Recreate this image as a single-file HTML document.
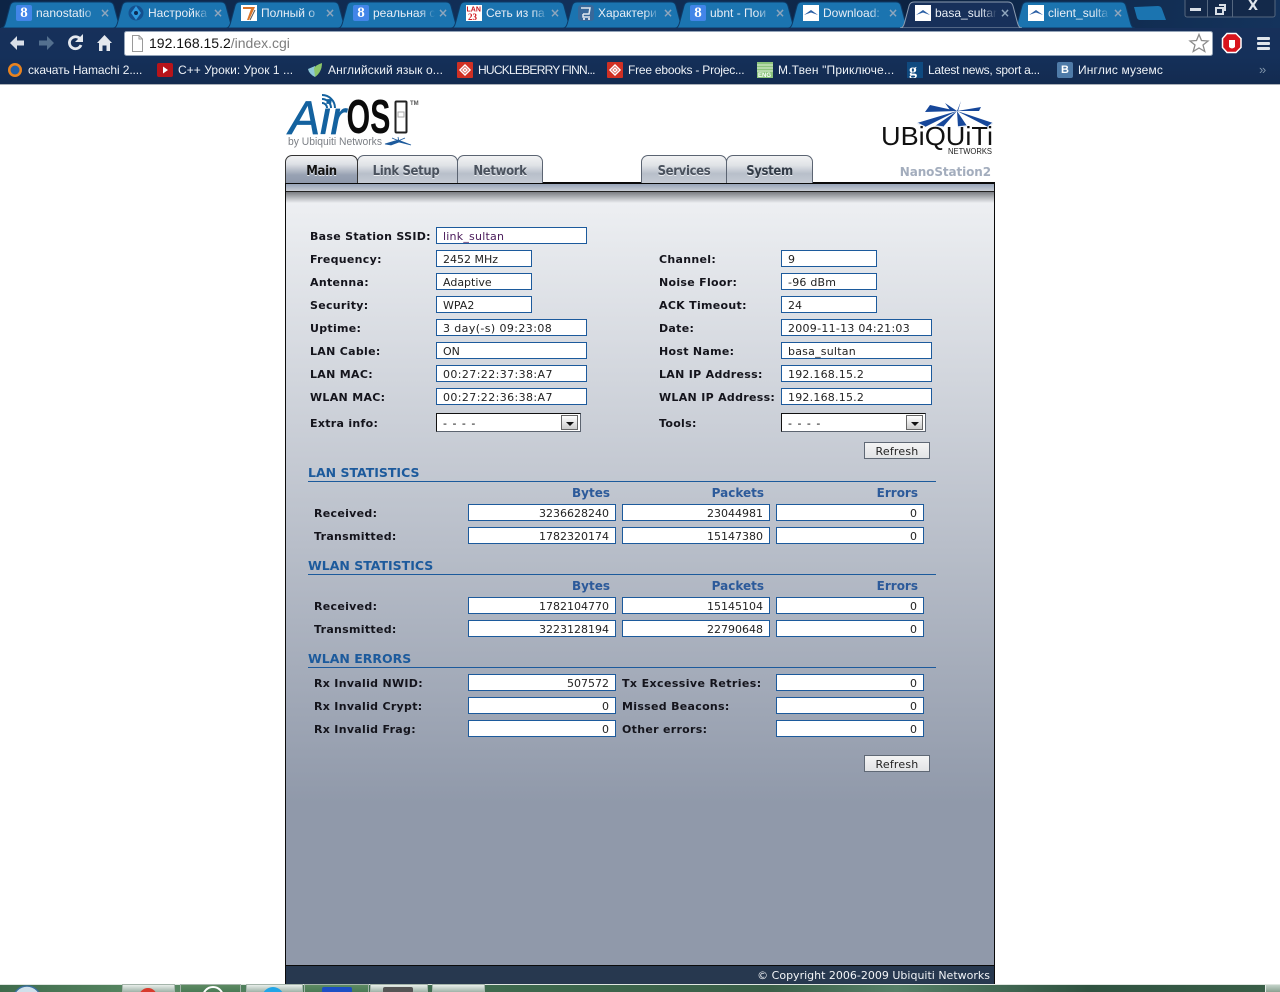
<!DOCTYPE html>
<html><head><meta charset="utf-8"><title>basa_sultan</title>
<style>
html,body{margin:0;padding:0;background:#fff;width:1280px;height:992px;overflow:hidden}
body{position:relative;font:11px "DejaVu Sans",sans-serif;color:#111}
div,span,svg{position:absolute}
.l{font-weight:bold;height:17px;line-height:19px;white-space:nowrap;color:#14141c;letter-spacing:.3px}
.i{box-sizing:border-box;height:17px;background:#fff;border:1px solid #1c5a9c;line-height:17px;padding:0 6px;white-space:nowrap;color:#222}
.s{width:96px}.m{width:151px}.n{width:148px;text-align:right}
.a{letter-spacing:.4px}.b{letter-spacing:.22px}
.sel{box-sizing:border-box;width:145px;height:19px;background:#fff;border:1px solid #111;border-right-color:#5c6470;border-bottom-color:#5c6470;line-height:19px;padding-left:6px;letter-spacing:1px;color:#000}
.sel b{position:absolute;right:2px;top:1px;width:15px;height:13px;border:1px solid #666;background:linear-gradient(#fff,#ccc);box-sizing:content-box}
.sel b:after{content:"";position:absolute;left:4px;top:6px;border:4px solid transparent;border-top:4px solid #111;border-bottom:0}
.btn{box-sizing:border-box;width:66px;height:17px;border:1px solid #5f6875;background:linear-gradient(#f4f4f4,#e2e3e6);text-align:center;line-height:17px;color:#222;letter-spacing:.2px}
.h{font:bold 12.5px/16px "DejaVu Sans",sans-serif;color:#1c5a9c;white-space:nowrap}
.r{height:1px;left:308px;width:628px;background:#1c5a9c}
.c{font:bold 12px/14px "DejaVu Sans",sans-serif;color:#2c5a9a;text-align:right;width:100px}
.tab{box-sizing:border-box;top:155px;height:28px;border:1px solid #5b6472;border-bottom:0;border-radius:7px 7px 0 0;background:linear-gradient(#f2f3f4 0,#dfe2e6 35%,#b8bfca 65%,#c4cad3 100%);text-align:center;font:bold 13px/31px "DejaVu Sans Condensed","Liberation Sans Narrow","DejaVu Sans",sans-serif;letter-spacing:-.35px;color:#4a525e;text-shadow:0 1px 0 #eef0f3}
.tt{color:#e8eef6;font:12px/16px "Liberation Sans",sans-serif;top:5px;width:62px;height:16px;overflow:hidden;white-space:nowrap;-webkit-mask-image:linear-gradient(90deg,#000 75%,transparent);mask-image:linear-gradient(90deg,#000 75%,transparent)}
.bm{color:#eef2f7;font:12px/16px "Liberation Sans",sans-serif;top:62px;white-space:nowrap}
.x{top:6px;color:#8fa6bd;font:bold 12px/14px "DejaVu Sans",sans-serif}
.ic{top:5px;width:16px;height:16px}
.g{background:#4285e8;color:#fff;font:bold 15px/16px "Liberation Serif",serif;text-align:center;border-radius:2px}
.w{background:#fff}
.ib{top:62px;width:16px;height:16px}
.tb{top:984px;height:8px;background:linear-gradient(#e8eeea,#9fb3a8);border:1px solid #a5b5ab;border-bottom:0;box-sizing:border-box}
</style></head><body>

<!-- browser chrome -->
<div style="left:0;top:0;width:1280px;height:28px;background:linear-gradient(100deg,#0d2445,#12305a 45%,#0c2342 70%,#14335c)"></div>
<svg style="left:0;top:0" width="1280" height="30" viewBox="0 0 1280 30">
<defs><path id="t" d="M0,28C3,28 4,25 5,21L9,6Q10,2 14,2L108,2Q112,2 113,6L117,21C118,25 119,28 122,28Z"/></defs>
<g fill="#1b74b0" stroke="#0d3a66" stroke-width="1">
<use href="#t" x="1"/><use href="#t" x="113"/><use href="#t" x="226"/><use href="#t" x="338"/><use href="#t" x="451"/><use href="#t" x="563"/><use href="#t" x="675"/><use href="#t" x="788"/><use href="#t" x="1013"/>
</g>
<use href="#t" x="900" fill="#17305a" stroke="#8c9cb0"/>
<path d="M1134,7L1158,6Q1161,6 1162,9L1166,20L1140,20Q1138,20 1137,18Z" fill="#1b74b0"/>
<g fill="#13294a" stroke="#55677f"><rect x="1185" y="-2" width="90" height="19" rx="2"/></g>
<path d="M1207.500,0V17M1232.500,0V17" stroke="#55677f"/>
<rect x="1190" y="8" width="11" height="3" fill="#d8dee6"/>
<path d="M1216,8h7v6h-7zM1219,5h6v6" fill="none" stroke="#d8dee6" stroke-width="2"/>
</svg>
<div style="left:1248px;top:0;color:#dfe5ec;font:bold 13px/14px 'DejaVu Sans',sans-serif">X</div>

<div class="ic g" style="left:16px">8</div><div class="tt" style="left:36px">nanostatio</div><div class="x" style="left:100px">×</div>
<svg class="ic" style="left:128px" viewBox="0 0 16 16"><circle cx="8" cy="8" r="7.500" fill="#14508f"/><path d="M8,1L13,8L8,15L3,8Z" fill="#2f9ae0"/><circle cx="8" cy="8" r="2" fill="#0c2a55"/></svg><div class="tt" style="left:148px">Настройка</div><div class="x" style="left:213px">×</div>
<svg class="ic" style="left:241px" viewBox="0 0 16 16"><rect width="16" height="16" fill="#fff"/><path d="M2,2H14L8,15H6L10,4H2Z" fill="#d9752a"/><path d="M9,15L14,5" stroke="#555" fill="none"/></svg><div class="tt" style="left:261px">Полный о</div><div class="x" style="left:325px">×</div>
<div class="ic g" style="left:353px">8</div><div class="tt" style="left:373px">реальная с</div><div class="x" style="left:438px">×</div>
<svg class="ic" style="left:466px" viewBox="0 0 16 16"><rect width="16" height="16" fill="#fff"/><rect x="0" y="0" width="16" height="7" fill="#fff"/><text x="0.500" y="6.500" font-size="7" font-weight="bold" font-family="Liberation Sans" fill="#c8141c">LAN</text><text x="2" y="15" font-size="9" font-weight="bold" font-family="Liberation Serif" fill="#d01a20">23</text></svg><div class="tt" style="left:486px">Сеть из па</div><div class="x" style="left:550px">×</div>
<svg class="ic" style="left:578px" viewBox="0 0 16 16"><rect width="16" height="16" rx="3" fill="#38689a"/><path d="M3,3H12L11,9H5M5,9V12H12" fill="none" stroke="#dfe8f0" stroke-width="1.500"/><circle cx="6" cy="14" r="1" fill="#fff"/><circle cx="11" cy="14" r="1" fill="#fff"/></svg><div class="tt" style="left:598px">Характери</div><div class="x" style="left:663px">×</div>
<div class="ic g" style="left:690px">8</div><div class="tt" style="left:710px">ubnt - Пои</div><div class="x" style="left:775px">×</div>
<svg class="ic w" style="left:803px" viewBox="0 0 16 16"><path d="M1,10L8,5L15,10L8,7.500Z" fill="#2a5fa5"/></svg><div class="tt" style="left:823px">Download:</div><div class="x" style="left:888px">×</div>
<svg class="ic w" style="left:915px" viewBox="0 0 16 16"><path d="M1,10L8,5L15,10L8,7.500Z" fill="#2a5fa5"/></svg><div class="tt" style="left:935px">basa_sultar</div><div class="x" style="left:1000px">×</div>
<svg class="ic w" style="left:1028px" viewBox="0 0 16 16"><path d="M1,10L8,5L15,10L8,7.500Z" fill="#2a5fa5"/></svg><div class="tt" style="left:1048px">client_sulta</div><div class="x" style="left:1113px">×</div>

<div style="left:0;top:28px;width:1280px;height:56px;background:linear-gradient(#17305a,#15305a 50%,#132b50)"></div>
<div style="left:0;top:84px;width:1280px;height:1px;background:#aab0b8"></div>
<svg style="left:0;top:28px" width="1280" height="32" viewBox="0 0 1280 32">
<path d="M10,15L17,8V12.500H24V17.500H17V22Z" fill="#d9dfe8"/>
<path d="M54,15L47,8V12.500H39V17.500H47V22Z" fill="#54708f"/>
<path d="M80.500,11.500A6,6 0 1 0 81,17" fill="none" stroke="#e4e8ee" stroke-width="2.800"/><path d="M83,6V14H75Z" fill="#e4e8ee"/>
<path d="M97,15L104.500,7L112,15H110V23H106.500V17.500H102.500V23H99V15Z" fill="#e4e8ee"/>
<rect x="124.500" y="3.500" width="1088" height="24" rx="2" fill="#fff" stroke="#94a4b8"/>
<path d="M132.500,7.500H139L142.500,11V23.500H132.500ZM139,7.500V11H142.500" fill="#fff" stroke="#9a9a9a"/>
<path d="M1199,6.500L1201.500,12.500L1208,13L1203,17L1204.800,23.500L1199,20L1193.200,23.500L1195,17L1190,13L1196.500,12.500Z" fill="#fff" stroke="#8b8b8b" stroke-width="1.300"/>
<path d="M1227,5.500H1236L1241,10.500V19.500L1236,24.500H1227L1222.500,19.500V10.500Z" fill="#d8141c" stroke="#fff" stroke-width="1.500"/>
<path d="M1229,13V19Q1232,22 1235,19V12H1229Z" fill="#fff"/>
<rect x="1257" y="9" width="13" height="3" rx="1" fill="#dfe4ea"/><rect x="1257" y="14" width="13" height="3" rx="1" fill="#dfe4ea"/><rect x="1257" y="19" width="13" height="3" rx="1" fill="#dfe4ea"/>
</svg>
<div style="left:149px;top:34px;font:14px/18px 'Liberation Sans',sans-serif;color:#111;white-space:nowrap">192.168.15.2<span style="position:static;color:#7d7d7d">/index.cgi</span></div>

<svg class="ib" style="left:7px" viewBox="0 0 16 16"><circle cx="8" cy="8" r="7" fill="#e8831f"/><circle cx="8" cy="8" r="4.500" fill="#1e5ea8"/></svg><div class="bm" style="left:28px;letter-spacing:-.1px">скачать Hamachi 2....</div>
<svg class="ib" style="left:157px" viewBox="0 0 16 16"><rect y="1" width="16" height="14" rx="2" fill="#b8141a"/><path d="M6,4.500L11,8L6,11.500Z" fill="#fff"/></svg><div class="bm" style="left:178px;letter-spacing:.05px">C++ Уроки: Урок 1 ...</div>
<svg class="ib" style="left:307px" viewBox="0 0 16 16"><path d="M1,7L8,4L8,15Q2,12 1,7Z" fill="#8fc8d8"/><path d="M8,15L7,6Q9,3 15,1Q15,10 8,15Z" fill="#8cc66a"/></svg><div class="bm" style="left:328px;letter-spacing:.1px">Английский язык о...</div>
<svg class="ib" style="left:457px" viewBox="0 0 16 16"><rect width="16" height="16" rx="1" fill="#d03024"/><path d="M8,3L13,8L8,13L3,8ZM8,6L6,8L8,10L10,8Z" fill="none" stroke="#fff" stroke-width="1.500"/></svg><div class="bm" style="left:478px;letter-spacing:-.75px">HUCKLEBERRY FINN...</div>
<svg class="ib" style="left:607px" viewBox="0 0 16 16"><rect width="16" height="16" rx="1" fill="#d03024"/><path d="M8,3L13,8L8,13L3,8ZM8,6L6,8L8,10L10,8Z" fill="none" stroke="#fff" stroke-width="1.500"/></svg><div class="bm" style="left:628px;letter-spacing:-.22px">Free ebooks - Projec...</div>
<svg class="ib" style="left:757px" viewBox="0 0 16 16"><rect width="16" height="16" fill="#8cc47c"/><path d="M0,3H16M0,6H16M0,9H16" stroke="#e2f0da"/><text x="1" y="15" font-size="6" font-weight="bold" font-family="Liberation Sans" fill="#fff">ENG</text></svg><div class="bm" style="left:778px;letter-spacing:.16px">М.Твен "Приключе...</div>
<svg class="ib" style="left:907px" viewBox="0 0 16 16"><rect width="16" height="16" fill="#0f4a80"/><text x="2" y="13" font-size="16" font-weight="bold" font-family="Liberation Serif" fill="#fff">g</text></svg><div class="bm" style="left:928px;letter-spacing:-.24px">Latest news, sport a...</div>
<div class="ib" style="left:1057px;background:#4f7ba8;color:#fff;font:bold 11px/16px 'Liberation Sans',sans-serif;text-align:center;border-radius:2px">В</div><div class="bm" style="left:1078px;letter-spacing:.15px">Инглис муземс</div>
<div class="bm" style="left:1259px;color:#7f93a9;font-size:13px">»</div>

<!-- AirOS logo -->
<svg style="left:285px;top:92px" width="135" height="60" viewBox="0 0 135 60">
<text x="4" y="42" font-family="Liberation Sans" font-style="italic" font-size="47" fill="#14629f" stroke="#14629f" stroke-width=".7" textLength="57" lengthAdjust="spacingAndGlyphs">Air</text>
<g transform="translate(61.500,41) scale(1,1.35)"><text x="0" y="0" font-family="Liberation Sans" font-weight="bold" font-size="36" fill="#0b0b0b" textLength="44" lengthAdjust="spacingAndGlyphs">OS</text></g>
<path d="M37,11A5,5 0 0 1 42,16M37,7A9,9 0 0 1 46,16M37,3A13,13 0 0 1 50,16" fill="none" stroke="#14629f" stroke-width="2"/>
<rect x="110.500" y="9.500" width="11" height="31" rx="1" fill="#fff" stroke="#222" stroke-width="2"/>
<rect x="113" y="20" width="6" height="5" fill="none" stroke="#aaa"/>
<text x="125" y="13" font-family="Liberation Sans" font-weight="bold" font-size="6" fill="#555">TM</text>
<text x="3" y="53" font-family="Liberation Sans" font-size="11" fill="#7b7f85" textLength="94" lengthAdjust="spacingAndGlyphs">by Ubiquiti Networks</text>
<path d="M100,52L113,48L126,53L114,50L106,53ZM113,45L114,50M107,46L114,49M120,46L113,49" fill="#1d5a9c" stroke="#1d5a9c" stroke-width=".8"/>
</svg>

<!-- Ubiquiti logo -->
<svg style="left:875px;top:98px" width="122" height="60" viewBox="0 0 122 60">
<path d="M82,13L42,25L50,29ZM82,13L60,28L68,29ZM82,13L83,29L92,28ZM82,13L118,25L113,29ZM82,13L55,7L50,14ZM82,13L70,5L75,12ZM82,13L86,3L83,13ZM82,13L106,9L104,13Z" fill="#16479a"/>
<path d="M42,25L50,29M60,28L68,29M83,29L92,28M118,25L113,29" stroke="#e8eef6" stroke-width="1.500" fill="none"/>
<text x="6" y="47" font-family="Liberation Sans" font-size="26" fill="#111" textLength="112" lengthAdjust="spacingAndGlyphs">UBiQUiTi</text>
<text x="73" y="56" font-family="Liberation Sans" font-size="8" fill="#222" textLength="44" lengthAdjust="spacingAndGlyphs">NETWORKS</text>
</svg>
<div style="left:891px;top:165px;width:100px;text-align:right;font:bold 12px/15px 'DejaVu Sans',sans-serif;color:#a3adbd;letter-spacing:-.1px">NanoStation2</div>

<!-- main panel -->
<div style="left:285px;top:182px;width:710px;height:803px;box-sizing:border-box;border:1px solid #0a0a0a;border-bottom:0;border-top:2px solid #0a0a0a;background:#9099aa"></div>
<div style="left:286px;top:184px;width:708px;height:7px;background:linear-gradient(#97a3b8,#c8ccd4)"></div>
<div style="left:286px;top:191px;width:708px;height:1px;background:#222"></div>
<div style="left:286px;top:192px;width:708px;height:11px;background:linear-gradient(#7a7d82,#eceef1)"></div>
<div style="left:286px;top:203px;width:708px;height:762px;background:linear-gradient(#edeff2 0,#9099aa 600px,#9099aa 100%)"></div>
<div style="left:286px;top:965px;width:708px;height:1px;background:#0a0a0a"></div>
<div style="left:286px;top:966px;width:708px;height:18px;background:#27384f"></div>
<div style="left:690px;top:967px;width:300px;text-align:right;color:#f2f4f7;line-height:17px;white-space:nowrap">© Copyright 2006-2009 Ubiquiti Networks</div>

<div class="tab" style="left:285px;width:73px;background:linear-gradient(#f0f1f3 0,#dde0e5 30%,#98a2b3 70%,#8f99ac 100%);color:#111;border-color:#333;z-index:2">Main</div>
<div class="tab" style="left:357px;width:101px;text-indent:-3px">Link Setup</div>
<div class="tab" style="left:457px;width:86px">Network</div>
<div class="tab" style="left:641px;width:86px">Services</div>
<div class="tab" style="left:726px;width:87px;color:#333c48">System</div>

<!-- left column -->
<div class="l" style="left:310px;top:227px">Base Station SSID:</div><div class="i m b" style="left:436px;top:227px;color:#4a1a5a">link_sultan</div>
<div class="l" style="left:310px;top:250px">Frequency:</div><div class="i s" style="left:436px;top:250px">2452 MHz</div>
<div class="l" style="left:310px;top:273px">Antenna:</div><div class="i s" style="left:436px;top:273px">Adaptive</div>
<div class="l" style="left:310px;top:296px">Security:</div><div class="i s" style="left:436px;top:296px">WPA2</div>
<div class="l" style="left:310px;top:319px">Uptime:</div><div class="i m a" style="left:436px;top:319px">3 day(-s) 09:23:08</div>
<div class="l" style="left:310px;top:342px">LAN Cable:</div><div class="i m" style="left:436px;top:342px">ON</div>
<div class="l" style="left:310px;top:365px">LAN MAC:</div><div class="i m a" style="left:436px;top:365px">00:27:22:37:38:A7</div>
<div class="l" style="left:310px;top:388px">WLAN MAC:</div><div class="i m a" style="left:436px;top:388px">00:27:22:36:38:A7</div>
<div class="l" style="left:310px;top:414px">Extra info:</div><div class="sel" style="left:436px;top:413px">- - - -<b></b></div>

<!-- right column -->
<div class="l" style="left:659px;top:250px">Channel:</div><div class="i s" style="left:781px;top:250px">9</div>
<div class="l" style="left:659px;top:273px">Noise Floor:</div><div class="i s b" style="left:781px;top:273px">-96 dBm</div>
<div class="l" style="left:659px;top:296px">ACK Timeout:</div><div class="i s" style="left:781px;top:296px">24</div>
<div class="l" style="left:659px;top:319px">Date:</div><div class="i m" style="left:781px;top:319px;letter-spacing:.27px">2009-11-13 04:21:03</div>
<div class="l" style="left:659px;top:342px">Host Name:</div><div class="i m b" style="left:781px;top:342px">basa_sultan</div>
<div class="l" style="left:659px;top:365px">LAN IP Address:</div><div class="i m b" style="left:781px;top:365px">192.168.15.2</div>
<div class="l" style="left:659px;top:388px">WLAN IP Address:</div><div class="i m b" style="left:781px;top:388px">192.168.15.2</div>
<div class="l" style="left:659px;top:414px">Tools:</div><div class="sel" style="left:781px;top:413px">- - - -<b></b></div>
<div class="btn" style="left:864px;top:442px">Refresh</div>

<!-- LAN statistics -->
<div class="h" style="left:308px;top:465px">LAN STATISTICS</div><div class="r" style="top:481px"></div>
<div class="c" style="left:510px;top:486px">Bytes</div><div class="c" style="left:664px;top:486px">Packets</div><div class="c" style="left:818px;top:486px">Errors</div>
<div class="l" style="left:314px;top:504px">Received:</div><div class="i n" style="left:468px;top:504px">3236628240</div><div class="i n" style="left:622px;top:504px">23044981</div><div class="i n" style="left:776px;top:504px">0</div>
<div class="l" style="left:314px;top:527px">Transmitted:</div><div class="i n" style="left:468px;top:527px">1782320174</div><div class="i n" style="left:622px;top:527px">15147380</div><div class="i n" style="left:776px;top:527px">0</div>

<!-- WLAN statistics -->
<div class="h" style="left:308px;top:558px">WLAN STATISTICS</div><div class="r" style="top:574px"></div>
<div class="c" style="left:510px;top:579px">Bytes</div><div class="c" style="left:664px;top:579px">Packets</div><div class="c" style="left:818px;top:579px">Errors</div>
<div class="l" style="left:314px;top:597px">Received:</div><div class="i n" style="left:468px;top:597px">1782104770</div><div class="i n" style="left:622px;top:597px">15145104</div><div class="i n" style="left:776px;top:597px">0</div>
<div class="l" style="left:314px;top:620px">Transmitted:</div><div class="i n" style="left:468px;top:620px">3223128194</div><div class="i n" style="left:622px;top:620px">22790648</div><div class="i n" style="left:776px;top:620px">0</div>

<!-- WLAN errors -->
<div class="h" style="left:308px;top:651px">WLAN ERRORS</div><div class="r" style="top:667px"></div>
<div class="l" style="left:314px;top:674px">Rx Invalid NWID:</div><div class="i n" style="left:468px;top:674px">507572</div><div class="l" style="left:622px;top:674px;letter-spacing:.4px">Tx Excessive Retries:</div><div class="i n" style="left:776px;top:674px">0</div>
<div class="l" style="left:314px;top:697px">Rx Invalid Crypt:</div><div class="i n" style="left:468px;top:697px">0</div><div class="l" style="left:622px;top:697px">Missed Beacons:</div><div class="i n" style="left:776px;top:697px">0</div>
<div class="l" style="left:314px;top:720px">Rx Invalid Frag:</div><div class="i n" style="left:468px;top:720px">0</div><div class="l" style="left:622px;top:720px">Other errors:</div><div class="i n" style="left:776px;top:720px">0</div>
<div class="btn" style="left:864px;top:755px">Refresh</div>

<!-- taskbar -->
<div style="left:0;top:984px;width:1280px;height:8px;background:linear-gradient(90deg,#3f6b4c,#5a8a64 12%,#3f6e50 30%,#3a5f48 60%,#568068 70%,#2f5240 85%,#3a5f48);border-top:1px solid #dfe6e0;box-sizing:border-box"></div>
<svg style="left:0;top:984px" width="500" height="8" viewBox="0 0 500 8"><circle cx="27" cy="16" r="14" fill="#cfe0ea" stroke="#3b6f9c" stroke-width="1.500"/></svg>
<div class="tb" style="left:122px;width:53px"></div>
<div class="tb" style="left:180px;width:61px;background:linear-gradient(#5d8a62,#4a7a56)"></div>
<div class="tb" style="left:246px;width:57px"></div>
<div class="tb" style="left:304px;width:65px;background:linear-gradient(#5d8a62,#4a7a56)"></div>
<div class="tb" style="left:370px;width:58px"></div>
<div class="tb" style="left:432px;width:53px"></div>
<svg style="left:0;top:984px" width="500" height="8" viewBox="0 0 500 8"><circle cx="148" cy="13" r="9" fill="#d83a2c"/><circle cx="213" cy="13" r="10" fill="none" stroke="#fff" stroke-width="2"/><circle cx="273" cy="14" r="11" fill="#22a5e6"/><rect x="322" y="3" width="30" height="6" rx="2" fill="#1d4fc4"/><rect x="383" y="3" width="30" height="6" rx="2" fill="#555"/></svg>
<div style="left:1265px;top:985px;width:15px;height:7px;background:linear-gradient(#c2d2c8,#8aa090);border-left:1px solid #e6ece8;box-sizing:border-box"></div>
</body></html>
